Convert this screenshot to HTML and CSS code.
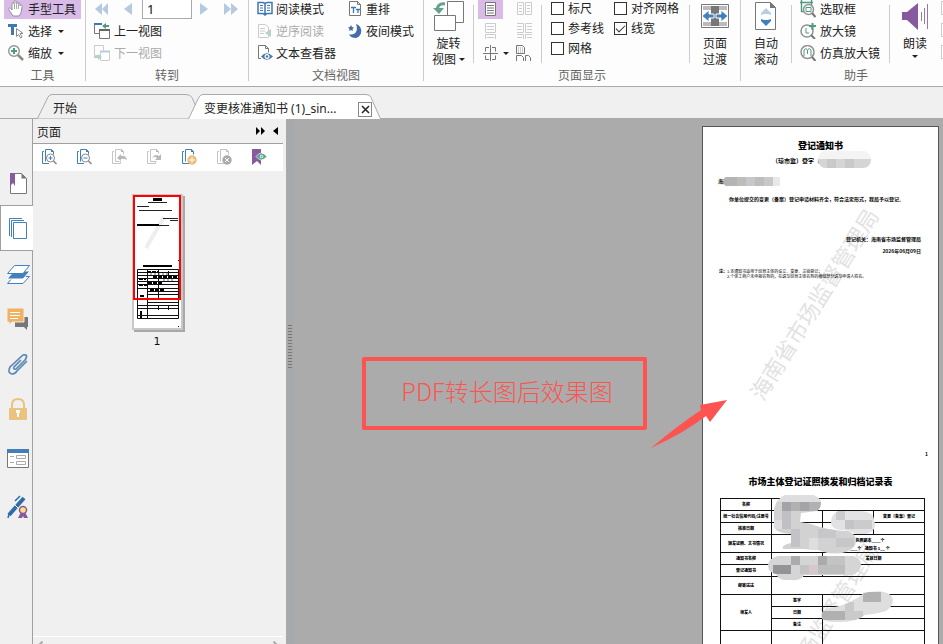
FILE: index.html
```html
<!DOCTYPE html>
<html lang="zh-CN">
<head>
<meta charset="utf-8">
<title>PDF 阅读器</title>
<link rel="stylesheet" href="styles.css">
</head>
<body>
<header class="ribbon">
  <section class="group group-tools">
    <div class="group-body rows">
      <button class="cmd active"><svg width="16" height="18" viewBox="0 0 16 18"><path d="M5 16 1 10c-1-2 1-3 2-1l1 1V4c0-2 2-2 2 0V2c0-2 2-2 2 0v1c0-2 2-2 2 0v1c0-2 3-1 2 1v1c1-2 3-1 2 1l-1 6-2 3z" fill="#fff" stroke="#9a8f9f"/><path d="M6.500 4v5M8.500 3v6M10.500 4v5" stroke="#aaa" stroke-width="1"/></svg>手型工具</button>
      <button class="cmd"><svg width="16" height="16" viewBox="0 0 16 16"><path d="M0 2.500h9M4.500 2v10" stroke="#3f78b4" stroke-width="3"/><path d="M8.500 5.500v8l2-2 2 3.500 1.500-1-2-3.500h3z" fill="#fff" stroke="#8a8a8a"/></svg>选择<svg class="caret" width="6" height="3" viewBox="0 0 6 3"><path d="M0 0h6L3 3z"/></svg></button>
      <button class="cmd"><svg width="16" height="16" viewBox="0 0 16 16"><circle cx="6" cy="6" r="5.300" fill="#fff" stroke="#929292" stroke-width="1.400"/><path d="M3 6h6M6 3v6" stroke="#4c9c80" stroke-width="2"/><path d="m10 10 5 5" stroke="#8a8a8a" stroke-width="2.500"/></svg>缩放<svg class="caret" width="6" height="3" viewBox="0 0 6 3"><path d="M0 0h6L3 3z"/></svg></button>
    </div>
    <h2>工具</h2>
  </section>

  <section class="group group-goto">
    <div class="group-body rows">
      <div class="pager">
        <button aria-label="首页"><svg width="16" height="14" viewBox="0 0 16 14"><path d="M8 1v12L1 7zM14 1v12L8 7z" fill="#b4cae1"/></svg></button>
        <button aria-label="上一页"><svg width="24" height="14" viewBox="0 0 24 14"><path d="M18 1v12l-8-6z" fill="#b4cae1"/></svg></button>
        <input type="text" value="1" aria-label="页码">
        <button aria-label="下一页"><svg width="24" height="14" viewBox="0 0 24 14"><path d="M4 1v12l8-6z" fill="#b4cae1"/></svg></button>
        <button aria-label="末页"><svg width="16" height="14" viewBox="0 0 16 14"><path d="M0 1v12l7-6zM7 1v12l7-6z" fill="#b4cae1"/></svg></button>
      </div>
      <button class="cmd"><svg width="17" height="16" viewBox="0 0 17 16"><path d="M.500 0v10.500h5M0 1.500h8" fill="none" stroke="#777"/><path d="M0 1h8" stroke="#3f78b4" stroke-width="2"/><path d="M5.500 6.500h10v9h-10z" fill="#fff" stroke="#777"/><path d="M5 7h11" stroke="#666" stroke-width="2"/><path d="M15 3h-4" stroke="#4c9c80" stroke-width="2"/><path d="M12 0v6L8 3z" fill="#4c9c80"/></svg>上一视图</button>
      <button class="cmd" disabled><svg width="17" height="16" viewBox="0 0 17 16"><path d="M.500 1v9.500h5M0 .500h9.500v5" fill="none" stroke="#ccc"/><path d="M6.500 6.500h9v9h-9z" fill="#fff" stroke="#ccc"/><path d="M6 6.500h10" stroke="#b4cae1" stroke-width="2"/><path d="M0 12h4" stroke="#b2d4c6" stroke-width="2"/><path d="M4 9v6l4-3z" fill="#b2d4c6"/></svg>下一视图</button>
    </div>
    <h2>转到</h2>
  </section>

  <section class="group group-docview">
    <div class="group-body doc-grid">
      <button class="cmd"><svg width="16" height="16" viewBox="0 0 16 16"><path d="M1 1.500h5l2 1 2-1h5v11h-5l-2 1.500-2-1.500H1zM8 2v12" fill="#fff" stroke="#3f78b4" stroke-width="1.500"/><path d="M3 4.500h3M3 7h3M3 9.500h3M10 4.500h3M10 7h3M10 9.500h3" stroke="#3f78b4"/></svg>阅读模式</button>
      <button class="cmd"><svg width="16" height="16" viewBox="0 0 16 16"><path d="M2.500.500h8l3 3v11h-11zM10.500.500v3h3" fill="#fff" stroke="#777"/><path d="M4 6.500h5M6.500 6v6M9 8.500h4M11 8v4" stroke="#3f78b4" stroke-width="1.300"/></svg>重排</button>
      <button class="cmd" disabled><svg width="16" height="16" viewBox="0 0 16 16"><path d="M1.500 1.500h7l3 3v10h-10zM3 5.500h5M3 8h5M3 10.500h4" fill="none" stroke="#ccc"/><path d="M14 6v8l-6-4z" fill="#b2d4c6"/></svg>逆序阅读</button>
      <button class="cmd"><svg width="16" height="16" viewBox="0 0 16 16"><path d="M9 1c7 2 7 12 0 14-3 0-6-1-7-4 5 2 10-2 7-10z" fill="#436da6"/><path d="m4 2 1 2 2 .500L5.500 6 6 8 4 7 2 8l.500-2L1 4.500 3 4z" fill="#436da6"/></svg>夜间模式</button>
      <button class="cmd"><svg width="16" height="16" viewBox="0 0 16 16"><path d="M4 13.500H1.500V.500h7l3 3v4M8.500.500v3h3" fill="#fff" stroke="#777"/><path d="M4 11.500Q9.500 5 16 11.500 9.500 18 4 11.500z" fill="#4779ab"/><circle cx="10" cy="11.500" r="2.500" fill="#fff"/><circle cx="10" cy="11.500" r="1.200" fill="#4779ab"/></svg>文本查看器</button>
    </div>
    <h2>文档视图</h2>
  </section>

  <section class="group group-pagedisplay">
    <div class="group-body">
      <button class="big rotate"><svg width="34" height="34" viewBox="0 0 34 34"><path d="M15.500 3.500h16v21h-16z" fill="#fff" stroke="#777"/><path d="M2.500 17.500h21v15h-21z" fill="#fff" stroke="#777"/><path d="M13 6c-5-1-8 2-7.500 6" fill="none" stroke="#62a38c" stroke-width="3"/><path d="M1 10h11l-5 6z" fill="#62a38c"/></svg><span>旋转</span><span>视图<svg class="caret" width="6" height="3" viewBox="0 0 6 3"><path d="M0 0h6L3 3z"/></svg></span></button>
      <i class="rule"></i>
      <div class="layouts">
        <button class="active" aria-label="单页"><svg width="25" height="20" viewBox="0 0 25 20"><path d="M7.500 3.500h10v13h-10zM9 6.500h7M9 9h7M9 11.500h7M9 14h7" fill="#fff" stroke="#777"/></svg></button>
        <button aria-label="双页"><svg width="20" height="20" viewBox="0 0 20 20"><path d="M3.500 3.500h6v12h-6zM11.500 3.500h6v12h-6zM5 6.500h3M5 9.500h3M5 12.500h3M13 6.500h3M13 9.500h3M13 12.500h3" fill="none" stroke="#ccc"/></svg></button>
        <button aria-label="连续"><svg width="25" height="20" viewBox="0 0 25 20"><path d="M7.500 2.500h10v9h-10zM9 5.500h7M9 8.500h7M7.500 18v-4.500h10V18M9 16.500h7" fill="none" stroke="#ccc"/></svg></button>
        <button aria-label="双页连续"><svg width="20" height="20" viewBox="0 0 20 20"><path d="M3 2.500h6.500v9H3M18 2.500h-6.500v9H18M3 13.500h6.500V18M18 13.500h-6.500V18M3 5.500h5M3 8.500h5M13 5.500h5M13 8.500h5M3 16.500h5M13 16.500h5" fill="none" stroke="#ccc"/></svg></button>
        <button aria-label="拆分"><svg width="25" height="20" viewBox="0 0 25 20"><path d="M12.500 2v16M5 10.500h15M11 4.500H7.500v4M14 4.500h3.500v4M11 16.500H7.500v-4M14 16.500h3.500v-4" fill="none" stroke="#777"/></svg><svg class="caret" width="6" height="3" viewBox="0 0 6 3"><path d="M0 0h6L3 3z"/></svg></button>
        <button aria-label="封面"><svg width="20" height="20" viewBox="0 0 20 20"><path d="M2.500 2.500h6l2 2v6h-8zM2.500 18v-5.500h5l2 2V18M11.500 18v-5.500h3l2 2V18" fill="none" stroke="#777"/><path d="M4 5h5M4 7h5M4 9h5" stroke="#999" stroke-dasharray="1 1"/></svg></button>
      </div>
      <i class="rule"></i>
      <div class="checks">
        <label><input type="checkbox">标尺</label>
        <label><input type="checkbox">对齐网格</label>
        <label><input type="checkbox">参考线</label>
        <label><input type="checkbox" checked>线宽</label>
        <label><input type="checkbox">网格</label>
      </div>
      <i class="rule"></i>
      <button class="big"><svg width="34" height="34" viewBox="0 0 34 34"><path d="M3.500 6.500h27v23h-27z" fill="#fff" stroke="#777"/><path d="M13 8h8v20h-8z" fill="#777"/><path d="M5 8h8v4H5zM21 8h8v4h-8zM5 24h8v4H5zM21 24h8v4h-8z" fill="#bbb"/><path d="M4 18l7-6v4h5v4h-5v4zM30 18l-7-6v4h-5v4h5v4z" fill="#4380bb" stroke="#fff"/></svg><span>页面</span><span>过渡</span></button>
    </div>
    <h2>页面显示</h2>
  </section>

  <section class="group group-helper">
    <div class="group-body">
      <button class="big"><svg width="34" height="34" viewBox="0 0 34 34"><path d="M6.500 4.500h15l5 5v22h-20z" fill="#fff" stroke="#777"/><path d="M21 4v6h6z" fill="#777"/><path d="m17 10 5 5v2l-3-1h-4l-3 1v-2z" fill="#b7cee4"/><path d="m17 28 5-5v-2l-3 1h-4l-3-1v2z" fill="#4380bb"/></svg><span>自动</span><span>滚动</span></button>
      <i class="rule"></i>
      <div class="rows helper-rows">
        <button class="cmd"><svg width="16" height="18" viewBox="0 0 16 18"><path d="M1.500 0v12M0 2.500h13M11.500 0v12M1 11.500h12" fill="none" stroke="#4c9c80" stroke-width="1.400"/><circle cx="8.500" cy="9.500" r="5" fill="#fff" stroke="#929292" stroke-width="1.500"/><path d="M6 7.500h5v4H6z" fill="none" stroke="#4c9c80"/><path d="m12 13 3.500 4" stroke="#777" stroke-width="2"/></svg>选取框</button>
        <button class="cmd"><svg width="16" height="16" viewBox="0 0 16 16"><circle cx="7" cy="8" r="6" fill="#fff" stroke="#929292" stroke-width="1.500"/><path d="M6 5v5h3" fill="none" stroke="#4c9c80"/><path d="M9 3h7M12.500 0v7" stroke="#4c9c80" stroke-width="2"/><path d="m11 12 4 4" stroke="#777" stroke-width="2"/></svg>放大镜</button>
        <button class="cmd"><svg width="16" height="16" viewBox="0 0 16 16"><circle cx="7.500" cy="7" r="6.500" fill="#fff" stroke="#929292" stroke-width="1.500"/><path d="M4 11V5q2-3 3.500 0v4V5Q9 2 11 5v6" fill="none" stroke="#4c9c80"/><path d="m12 12 3.500 4" stroke="#777" stroke-width="2"/></svg>仿真放大镜</button>
      </div>
      <i class="rule"></i>
      <button class="big"><svg width="34" height="34" viewBox="0 0 34 34"><path d="M4 14h5L20 5v27L9 22H4z" fill="#87599f"/><path d="M23.500 14v9M26.500 10v16M29.500 6v25" stroke="#9c74b0"/></svg><span>朗读</span><svg class="caret below" width="6" height="3" viewBox="0 0 6 3"><path d="M0 0h6L3 3z"/></svg></button>
      <div class="more"><b></b><b></b><b></b></div>
    </div>
    <h2>助手</h2>
  </section>
</header>

<nav class="tabs">
  <a class="tab first" href="#start"><svg viewBox="0 0 164 25" preserveAspectRatio="none"><path d="M.500 24.500 11 3Q12.500.500 15 .500h134q4 0 6 3l9 21" fill="#f0f0f0" stroke="#aaa"/></svg><span>开始</span></a>
  <a class="tab second" href="#doc"><svg viewBox="0 0 193 25" preserveAspectRatio="none"><path d="M.500 25 11 3Q12.500.500 15 .500h163q4 0 5 3l9.500 21.500" fill="#fff" stroke="#aaa"/></svg><span>变更核准通知书 (1)_sin...</span></a>
  <button class="tab-close" aria-label="关闭"><svg width="9" height="9" viewBox="0 0 9 9"><path d="m1 1 7 7M8 1 1 8" stroke="#222" stroke-width="1.500"/></svg></button>
</nav>

<main class="workspace">
  <nav class="rail">
    <button aria-label="书签"><svg width="24" height="24" viewBox="0 0 24 24"><path d="M4.500 2.500h11l5 5v15h-16z" fill="#fff" stroke="#777"/><path d="M15.500 2.500v5h5z" fill="#777"/><path d="M4 2h5v13l-2-3-3 3z" fill="#87599f"/></svg></button>
    <button class="selected" aria-label="页面"><svg width="24" height="24" viewBox="0 0 24 24"><path d="M3.500 20V2.500H16M5.500 21V4.500H18" fill="none" stroke="#4380bb"/><path d="M7.500 6.500h13v16h-13z" fill="#fff" stroke="#4380bb"/></svg></button>
    <button aria-label="图层"><svg width="24" height="24" viewBox="0 0 24 24"><path d="M7.500 14.500h16L17 21.500H1.500z" fill="#fff" stroke="#4380bb"/><path d="M8 9h16l-7 8H1z" fill="#4380bb" stroke="#fff"/><path d="M8.500 3.500h15L17 11.500H1.500z" fill="#fff" stroke="#4380bb"/></svg></button>
    <button aria-label="注释"><svg width="24" height="24" viewBox="0 0 24 24"><path d="M9 10h13v10h-1v3l-3-3H9z" fill="#777"/><path d="M1 1h17v14H6l-3 3v-3H1z" fill="#eeb261" stroke="#f0f0f0"/><path d="M4 5.500h10M4 8.500h10M4 11.500h8" stroke="#fff"/></svg></button>
    <button aria-label="附件"><svg width="24" height="24" viewBox="0 0 24 24"><path d="m15 8-7 7q-1 3 2 2l9-9q4-6-2-5L4 15q-3 6 2 7 3 0 5-3l10-10" fill="none" stroke="#5b88b5" stroke-width="1.700"/></svg></button>
    <button aria-label="安全"><svg width="24" height="24" viewBox="0 0 24 24"><path d="M6 12V8q0-6 6-6t6 6v4" fill="none" stroke="#ebc27e" stroke-width="2"/><rect x="3" y="11" width="18" height="12" rx="1" fill="#ebc27e"/><path d="M10 13h4v3h-1v4h-2v-4h-1z" fill="#fff"/></svg></button>
    <button class="spaced" aria-label="表单"><svg width="24" height="24" viewBox="0 0 24 24"><path d="M1.500 3.500h21v18h-21z" fill="#fff" stroke="#777"/><path d="M1 3h22v4H1z" fill="#4380bb"/><path d="M4 10.500h4M4 16.500h4M10.500 9.500h9v3h-9zM10.500 15.500h9v3h-9z" fill="none" stroke="#aaa"/></svg></button>
    <button class="spaced" aria-label="签名"><svg width="24" height="24" viewBox="0 0 24 24"><path d="M18 3 10 12M10 12l-7 8" stroke="#2e6da9" stroke-width="4"/><path d="m9 10 4 4" stroke="#fff"/><path d="m9 6 5-5M3 19l-1 4" stroke="#2e6da9" stroke-width="1.500"/><path d="m15 17-3 6h4l1-2 1 2h4l-3-6z" fill="#87599f"/><circle cx="17" cy="15" r="3.500" fill="#ffdf7e" stroke="#87599f" stroke-width="1.500"/></svg></button>
  </nav>

  <aside class="panel">
    <header class="panel-head"><h3>页面</h3>
      <button aria-label="展开"><svg width="9" height="8" viewBox="0 0 9 8"><path d="M0 0v8l4-4zM5 0v8l4-4z"/></svg></button>
      <button aria-label="折叠"><svg width="5" height="8" viewBox="0 0 5 8"><path d="M5 0v8L0 4z"/></svg></button>
    </header>
    <div class="panel-tools">
      <button aria-label="放大缩略图"><svg width="16" height="16" viewBox="0 0 16 16"><path d="M3 2.500H1.500v12H8M4.500 12.500V.500h6l2 2v3" fill="none" stroke="#4380bb"/><path d="M10 0v3h3z" fill="#4380bb"/><circle cx="9.500" cy="9" r="4" fill="#fff" stroke="#888"/><path d="M7.500 9h4M9.500 7v4" stroke="#4380bb"/><path d="m12.500 12 3 3" stroke="#888" stroke-width="1.500"/></svg></button>
      <button aria-label="缩小缩略图"><svg width="16" height="16" viewBox="0 0 16 16"><path d="M3 2.500H1.500v12H8M4.500 12.500V.500h6l2 2v3" fill="none" stroke="#4380bb"/><path d="M10 0v3h3z" fill="#4380bb"/><circle cx="9.500" cy="9" r="4" fill="#fff" stroke="#888"/><path d="M7.500 9h4" stroke="#4380bb"/><path d="m12.500 12 3 3" stroke="#888" stroke-width="1.500"/></svg></button>
      <button aria-label="向左旋转"><svg width="16" height="16" viewBox="0 0 16 16"><path d="M3 2.500H1.500v12h8v-2M4.500 12.500V.500h6l2 2v3M4.500 12.500h4" fill="none" stroke="#c4c4c4"/><path d="M10 0v3h3zM6 9l4-4v2q5-1 6 4-3-2-6-1v2z" fill="#b8b8b8"/></svg></button>
      <button aria-label="向右旋转"><svg width="16" height="16" viewBox="0 0 16 16"><path d="M3 2.500H1.500v12h8v-2M4.500 12.500V.500h6l2 2v2M4.500 12.500h6" fill="none" stroke="#c4c4c4"/><path d="M10 0v3h3zM15 5v6H9l2-2Q9 7 6 9q3-5 7-2z" fill="#b8b8b8"/></svg></button>
      <button aria-label="插入页面"><svg width="16" height="16" viewBox="0 0 16 16"><path d="M3 2.500H1.500v12H8M4.500 12.500V.500h6l2 2v3" fill="none" stroke="#4380bb"/><path d="M10 0v3h3z" fill="#4380bb"/><circle cx="11" cy="11" r="4.700" fill="#e9bd78"/><path d="M8 11h6M11 8v6" stroke="#fff"/></svg></button>
      <button aria-label="删除页面"><svg width="16" height="16" viewBox="0 0 16 16"><path d="M3 2.500H1.500v12H8M4.500 12.500V.500h6l2 2v3" fill="none" stroke="#c4c4c4"/><path d="M10 0v3h3z" fill="#c4c4c4"/><circle cx="11" cy="11" r="4.700" fill="#aaa"/><path d="m9 9 4 4M13 9l-4 4" stroke="#fff"/></svg></button>
      <button aria-label="书签视图"><svg width="16" height="16" viewBox="0 0 16 16"><path d="M1 0h9v16l-4-4-5 4z" fill="#87599f"/><path d="M5 7.500q5-7 11 0-6 7-11 0z" fill="#62a38c" stroke="#fff" stroke-width=".6"/><circle cx="10.500" cy="7.500" r="1.700" fill="#fff"/><circle cx="10.500" cy="7.500" r="1" fill="#62a38c"/></svg></button>
    </div>
    <div class="thumbs">
      <figure>
        <div class="thumb">
          <svg width="47" height="132" viewBox="134 196 47 132"><path d="m146 248 18-31" stroke="#eee" stroke-width="4"/><path d="M153 199.500h9" stroke="#000" stroke-width="3"/><path d="M148 202.500h19M137 206.500h12M139 210.500h33M163 218.500h15M170 220.500h8M137 225.500h32M178 260.500h1M178 326.500h1" stroke="#222" stroke-width="1"/><path d="M137 225h22M143 266h29" stroke="#000" stroke-width="2"/><path d="M137.500 269.500h41v49h-41zM147.500 269v49M158.500 270v30M168.500 271v8M158.500 305v5M168.500 305v5M137 272.500h42M137 275.500h42M137 278.500h42M137 281.500h42M137 284.500h42M137 288.500h42M147 291.500h32M147 294.500h32M137 299.500h42M147 302.500h32M137 305.500h42M137 308.500h42M137 315.500h42" fill="none" stroke="#111"/><path d="M147 272h12M153 277h24M139 279h7M148 283h15M139 285h8M150 290h14M140 296h4M141 311v7" stroke="#000" stroke-width="2" stroke-dasharray="4 1"/><path d="M150 274h18M163 280h12" stroke="#667" stroke-width="1" stroke-dasharray="2 2"/></svg>
          <span class="view-box"></span>
        </div>
        <figcaption>1</figcaption>
      </figure>
    </div>
    <footer class="panel-scroll"><svg width="5" height="8" viewBox="0 0 5 8"><path d="M4.500.500 1 4l3.500 4" fill="none" stroke="#aaa" stroke-width="2"/></svg><svg width="5" height="8" viewBox="0 0 5 8"><path d="M.500.500 4 4 .500 8" fill="none" stroke="#aaa" stroke-width="2"/></svg></footer>
  </aside>

  <section class="viewer">
    <div class="splitter"><i></i></div>
    <article class="page">
      <svg class="watermark" viewBox="703 127 235 518" width="235" height="518"><text transform="translate(763 402) rotate(-58)">海南省市场监督管理局</text><text transform="translate(763 736) rotate(-58)">海南省市场监督管理局</text></svg>
      <h1>登记通知书</h1>
      <p class="serial">（琼市监）登字〔</p>
      <p class="to">海南</p>
      <p class="body">你单位提交的变更（备案）登记申请材料齐全，符合法定形式，我局予以登记。</p>
      <p class="org">登记机关：海南省市场监督管理局</p>
      <p class="date">2026年06月09日</p>
      <div class="notes"><span>注：</span><ol><li>1.本通知书适用于经营主体的设立、变更、注销登记；</li><li>2.个体工商户未申报名称的，在填写经营主体名称的横线部分填写申请人姓名。</li></ol></div>
      <p class="folio">1</p>
      <h1 class="record">市场主体登记证照核发和归档记录表</h1>
      <table>
        <colgroup><col><col><col><col></colgroup>
        <tr><td>名称</td><td colspan="3"></td></tr>
        <tr><td>统一社会信用代码/注册号</td><td></td><td></td><td>变更（备案）登记</td></tr>
        <tr><td>核准日期</td><td></td><td></td><td></td></tr>
        <tr class="tall"><td>颁发证照、文书情况</td><td colspan="3"><div class="copies">执照副本____个</div><div class="copies">___个&nbsp;&nbsp;&nbsp; 通知书 1__ 个</div></td></tr>
        <tr><td>通知书名称</td><td></td><td colspan="2">发放日期</td></tr>
        <tr><td>登记通知书</td><td></td><td colspan="2"></td></tr>
        <tr class="tall"><td>邮寄送达</td><td colspan="3"></td></tr>
        <tr><td rowspan="3">领发人</td><td>签字</td><td colspan="2"></td></tr>
        <tr><td>日期</td><td colspan="2"></td></tr>
        <tr><td>备注</td><td colspan="2"></td></tr>
        <tr class="last"><td></td><td></td><td colspan="2"></td></tr>
      </table>
      <svg class="mosaic" viewBox="703 127 235 518" width="235" height="518">
        <defs>
          <clipPath id="m1"><rect x="818" y="151" width="53" height="17" rx="8"/></clipPath>
          <clipPath id="m2"><rect x="724" y="177" width="56" height="9" rx="3"/></clipPath>
          <clipPath id="m3"><path d="M785 495h28q8 3 8 8t-4 8l-16 2-1 9q10 1 20 5 15 4 28 4 8 3 8 10t-10 11q-14 4-28-2l-15-1h-20q-2-4 8-6v-9q-15-1-17-7v-18q2-10 11-14z"/></clipPath>
          <clipPath id="m4"><path d="M838 511h22q14 1 14 9 4 11-8 14h-10q-8-4-15-4-9 0-10-7 0-9 7-12z"/></clipPath>
          <clipPath id="m5"><path d="M778 556h75q8 2 8 9t-9 10h-48q-2 6-13 5h-7q-6-1-8-6-8-1-8-9 1-7 10-9z"/></clipPath>
          <clipPath id="m6"><path d="M830 608q20-3 34-15 12-3 20-1 9 2 9 9-2 9-10 11-8 2-18 3-10 8-30 7-13 0-14-6 1-7 9-8z"/></clipPath>
        </defs>
        <g clip-path="url(#m1)"><path d="M816 150h57v9h-57z" fill="#f4f4f4"/><path d="M816 159h57v10h-57z" fill="#d5d5d6"/><path d="M827 159h9v10h-9zM845 159h9v10h-9z" fill="#c9c9ca"/></g>
        <g clip-path="url(#m2)"><path d="M724 176h57v12h-57z" fill="#c8c8cb"/><path d="M724 176h13v12h-13z" fill="#b4b4b4"/><path d="M737 176h9v12h-9zM755 176h9v12h-9z" fill="#bfbdbb"/><path d="M773 176h9v12h-9z" fill="#e9e9ec"/></g>
        <g clip-path="url(#m3)"><path d="M770 494h90v62h-90z" fill="#d2d2d3"/><path d="M773 494h50v8h-50z" fill="#dedede"/><path d="M782 502h9v9h-9zM800 502h9v9h-9z" fill="#a3a3a8"/><path d="M791 502h9v9h-9zM809 502h12v9h-12z" fill="#b1b1b2"/><path d="M782 511h9v18h-9z" fill="#bfbfc4"/><path d="M791 529h9v18h-9z" fill="#c3c3c7"/><path d="M818 529h18v9h-18zM836 538h18v9h-18z" fill="#c7c7ca"/><path d="M773 520h9v9h-9zM809 538h9v14h-9z" fill="#dedede"/></g>
        <g clip-path="url(#m4)"><path d="M830 510h46v26h-46z" fill="#e2e2e4"/><path d="M836 511h9v9h-9zM854 520h18v9h-18z" fill="#cbcbcc"/><path d="M845 520h9v9h-9z" fill="#c4c4c6"/></g>
        <g clip-path="url(#m5)"><path d="M767 555h96v28h-96z" fill="#d5d5d5"/><path d="M773 565h9v9h-9zM782 565h9v9h-9z" fill="#949498"/><path d="M791 556h9v9h-9zM818 556h9v9h-9z" fill="#ababad"/><path d="M800 565h9v9h-9zM827 556h18v9h-18z" fill="#c3c3c4"/><path d="M809 565h9v9h-9z" fill="#d5c9cc"/><path d="M818 565h27v9h-27z" fill="#bcbdbd"/></g>
        <g clip-path="url(#m6)"><path d="M818 590h77v36h-77z" fill="#dedede"/><path d="M863 592h18v10h-18z" fill="#b2b2b3"/><path d="M822 611h23v9h-23z" fill="#b0b0b2"/><path d="M845 611h18v9h-18zM845 602h9v9h-9z" fill="#cacaca"/></g>
      </svg>
    </article>
    <div class="callout">PDF转长图后效果图</div>
    <svg class="arrow" width="78" height="50" viewBox="650 399 78 50"><path d="M727 400 710 422l-4-6q-22 17-55 32 26-22 50-38l-1-5z" fill="#fd5452"/></svg>
  </section>
</main>
</body>
</html>
```
FILE: styles.css
```css
* { box-sizing: border-box; }
body {
  margin: 0;
  height: 100vh;
  display: flex;
  flex-direction: column;
  overflow: hidden;
  background: #f0f0f0;
  color: #222;
  font: 12px/16px "Noto Sans CJK SC", sans-serif;
}
h1, h2, h3, p, figure, ol { margin: 0; padding: 0; font-weight: 400; list-style: none; }
button {
  border: 0;
  padding: 0;
  margin: 0;
  background: none;
  color: inherit;
  font: inherit;
  display: flex;
  align-items: center;
}
svg { display: block; flex: none; }
a { color: inherit; text-decoration: none; }

/* Ribbon */
.ribbon {
  display: flex;
  align-items: flex-end;
  flex: none;
  height: 87px;
  overflow: hidden;
  background: #fdfdfd;
  border-bottom: 1px solid #aaa;
}
.group { position: relative; flex: none; border-right: 1px solid transparent; }
.group::after {
  content: "";
  position: absolute;
  right: -1px;
  top: 0;
  bottom: 5px;
  width: 1px;
  background: #ccc;
}
.group h2 { height: 22px; font-size: 12px; line-height: 22px; text-align: center; color: #666; }
.group-body { display: flex; height: 66px; }
.group-tools { width: 86px; }
.group-goto { width: 163px; }
.group-docview { width: 175px; }
.group-pagedisplay { width: 317px; }
.group-helper { width: 231px; }
.rows { display: flex; flex-direction: column; }
.cmd { height: 22px; gap: 3px; white-space: nowrap; }
.cmd:disabled { color: #aaa; }
.caret { fill: #222; }
.group-tools .rows { padding: 0 4px; }
.group-tools .cmd { padding-left: 4px; gap: 4px; }
.group-tools .caret { margin-left: 2px; }
.active { background: #d8bbe7; background-clip: padding-box; border-bottom: 1px solid transparent; }
.group-goto .rows { padding-left: 8px; }
.pager { display: flex; gap: 4px; height: 22px; }
.pager input {
  width: 50px;
  height: 21px;
  padding: 0 4px;
  border: 1px solid #aaa;
  background: #fff;
  color: #111;
  font: 13px "Noto Sans", sans-serif;
}
.doc-grid { display: grid; grid-template-columns: 90px auto; grid-auto-rows: 22px; padding-left: 8px; }
.rule { flex: none; width: 1px; height: 58px; margin-top: 7px; background: #ccc; }
.big { flex-direction: column; width: 50px; flex: none; justify-content: flex-start; }
.big > svg:first-child { margin-bottom: 3px; }
.big span { display: flex; align-items: center; gap: 3px; }
.big .below { margin-top: 4px; }
.rotate { width: 49px; }
.layouts { display: grid; grid-template-columns: 36px 27px; grid-auto-rows: 22px; padding-left: 4px; width: 67px; flex: none; }
.layouts button { justify-self: start; }
.checks { display: grid; grid-template-columns: 63px auto; grid-auto-rows: 20px; padding-left: 9px; width: 147px; flex: none; }
.checks label { display: flex; align-items: center; gap: 4px; white-space: nowrap; }
.checks input {
  appearance: none;
  position: relative;
  width: 13px;
  height: 13px;
  margin: 0;
  border: 1px solid #333;
  background: #fff;
}
.checks input:checked::after {
  content: "";
  position: absolute;
  left: 3px;
  top: 0;
  width: 4px;
  height: 8px;
  border: solid #333;
  border-width: 0 1px 1px 0;
  transform: rotate(45deg);
}
.helper-rows { padding-left: 8px; width: 97px; }
.helper-rows .cmd { gap: 4px; }
.more { display: flex; flex-direction: column; gap: 8px; padding-top: 3px; margin-left: 1px; }
.more b { width: 14px; height: 14px; border: 1px solid #ccc; background: #fff; }

/* Document tabs */
.tabs { display: flex; align-items: flex-end; flex: none; height: 32px; padding-left: 37px; border-bottom: 1px solid #aaa; }
.tab { position: relative; display: flex; align-items: center; height: 25px; margin-bottom: -1px; padding: 5px 0 0 16px; }
.tab svg { position: absolute; left: 0; top: 0; width: 100%; height: 100%; }
.tab span { position: relative; font-family: "Noto Sans", "Noto Sans CJK SC", sans-serif; white-space: nowrap; }
.first { width: 164px; }
.second { width: 193px; margin-left: -13px; }
.tab-close { position: relative; justify-content: center; width: 14px; height: 15px; margin: 0 0 1px -23px; border: 1px solid #888; background: #fff; }

/* Workspace */
.workspace { display: flex; flex: 1; min-height: 0; }
.rail { flex: none; width: 33px; padding-top: 41px; border-right: 1px solid #a0a0a0; }
.rail button { width: 32px; height: 45px; padding-left: 6px; }
.rail .selected { width: 33px; height: 46px; padding-left: 5px; background: #fff; border: 1px solid #a0a0a0; border-right: 0; }
.rail .spaced { margin-top: 4px; }
.panel { display: flex; flex-direction: column; flex: none; width: 253px; padding-right: 3px; }
.panel-head { display: flex; align-items: center; gap: 8px; height: 24px; padding: 0 5px 0 4px; }
.panel-head h3 { flex: 1; font-size: 12px; padding-top: 2px; }
.panel-tools { display: flex; height: 28px; border-top: 1px solid #a0a0a0; background: #fff; }
.panel-tools button { width: 35px; padding: 0 3px 2px 0; justify-content: center; }
.thumbs { flex: 1; padding: 23px 2px 0 0; }
.thumbs figure { width: 51px; margin: 0 auto; }
.thumb { position: relative; border: 2px solid #c8c8c8; background: #fff; box-shadow: 2px 2px #a8a8a8; }
.view-box { position: absolute; left: -1px; top: -1px; width: 48px; height: 105px; border: 2px solid #f00; }
figcaption { margin-top: 4px; text-align: center; color: #111; font-family: "DejaVu Sans", sans-serif; font-size: 11px; }
.panel-scroll { display: flex; justify-content: space-between; height: 8px; padding: 4px 5px 0; border-top: 1px solid #fff; overflow: hidden; }

/* Viewer */
.viewer { position: relative; display: flex; justify-content: space-between; flex: 1; min-width: 0; padding-right: 4px; overflow: hidden; background: #ababab; }
.splitter { display: flex; align-items: center; width: 8px; padding: 0 2px; background: #a7a9ab; }
.splitter i { width: 4px; height: 45px; margin-bottom: 69px; background: repeating-linear-gradient(#777 0 1px, transparent 1px 3px); }
.page { position: relative; flex: none; align-self: flex-start; width: 237px; margin-top: 7px; border: 1px solid #555; background: #fff; color: #000; }
.page p { position: relative; font-weight: 700; font-size: 5px; line-height: 6px; white-space: nowrap; }
.page h1 { position: relative; padding-top: 13px; font-size: 9px; line-height: 12px; font-weight: 900; text-align: center; }
.page .serial { margin: 5px 0 0 69px; font-size: 6px; line-height: 8px; }
.page .to { margin: 13px 0 0 15px; }
.page .body { margin: 12px 0 0 26px; }
.page .org { margin: 34px 17px 0 0; text-align: right; }
.page .date { margin: 6px 17px 0 0; text-align: right; }
.notes { position: relative; display: flex; margin: 15px 0 0 16px; font-size: 4px; line-height: 5px; font-weight: 900; white-space: nowrap; }
.page .folio { margin: 172px 10px 0 0; text-align: right; }
.page .record { padding-top: 19px; }
.page table {
  position: relative;
  width: 205px;
  margin: 10px 0 0 17px;
  border-collapse: collapse;
  table-layout: fixed;
  font-size: 4px;
  line-height: 5px;
  font-weight: 900;
  text-align: center;
}
.page td { height: 12px; padding: 0; border: 1px solid #111; white-space: nowrap; }
.page .tall td { height: 18px; }
.page .last td { height: 60px; }
.copies { padding-left: 44px; line-height: 8px; }
.watermark, .mosaic { position: absolute; left: 0; top: 0; }
.watermark text { fill: #e2e2e2; font-size: 22px; }
.callout {
  position: absolute;
  right: 296px;
  top: 238px;
  width: 285px;
  height: 73px;
  padding-left: 5px;
  border: 4px solid #fd5452;
  border-radius: 2px;
  color: #fd5452;
  font-size: 24px;
  font-weight: 300;
  line-height: 60px;
  text-align: center;
}
.arrow { position: absolute; right: 215px; top: 280px; }
```
